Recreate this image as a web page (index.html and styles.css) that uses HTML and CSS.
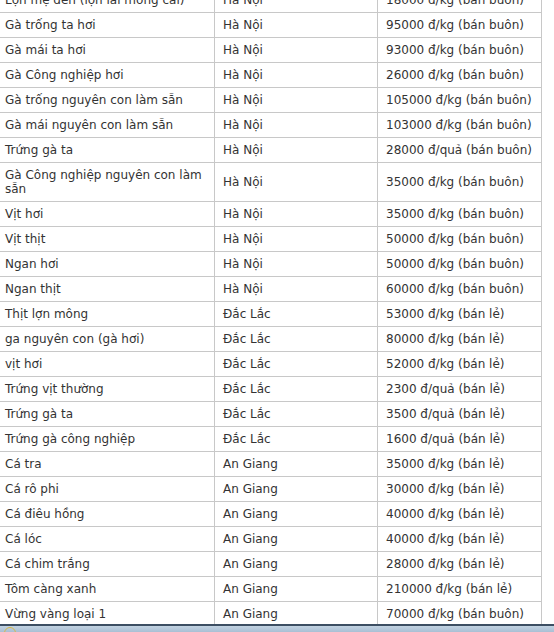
FILE: index.html
```html
<!DOCTYPE html>
<html lang="vi">
<head>
<meta charset="utf-8">
<link rel="stylesheet" href="styles.css">
</head>
<body>
<table class="prices">
<colgroup><col class="c1"><col class="c2"><col class="c3"></colgroup>
<tbody>
<tr><td>Lợn mẹ đen (lợn lai móng cái)</td><td>Hà Nội</td><td>18000 đ/kg (bán buôn)</td></tr>
<tr><td>Gà trống ta hơi</td><td>Hà Nội</td><td>95000 đ/kg (bán buôn)</td></tr>
<tr><td>Gà mái ta hơi</td><td>Hà Nội</td><td>93000 đ/kg (bán buôn)</td></tr>
<tr><td>Gà Công nghiệp hơi</td><td>Hà Nội</td><td>26000 đ/kg (bán buôn)</td></tr>
<tr><td>Gà trống nguyên con làm sẵn</td><td>Hà Nội</td><td>105000 đ/kg (bán buôn)</td></tr>
<tr><td>Gà mái nguyên con làm sẵn</td><td>Hà Nội</td><td>103000 đ/kg (bán buôn)</td></tr>
<tr><td>Trứng gà ta</td><td>Hà Nội</td><td>28000 đ/quả (bán buôn)</td></tr>
<tr><td>Gà Công nghiệp nguyên con làm sẵn</td><td>Hà Nội</td><td>35000 đ/kg (bán buôn)</td></tr>
<tr><td>Vịt hơi</td><td>Hà Nội</td><td>35000 đ/kg (bán buôn)</td></tr>
<tr><td>Vịt thịt</td><td>Hà Nội</td><td>50000 đ/kg (bán buôn)</td></tr>
<tr><td>Ngan hơi</td><td>Hà Nội</td><td>50000 đ/kg (bán buôn)</td></tr>
<tr><td>Ngan thịt</td><td>Hà Nội</td><td>60000 đ/kg (bán buôn)</td></tr>
<tr><td>Thịt lợn mông</td><td>Đắc Lắc</td><td>53000 đ/kg (bán lẻ)</td></tr>
<tr><td>ga nguyên con (gà hơi)</td><td>Đắc Lắc</td><td>80000 đ/kg (bán lẻ)</td></tr>
<tr><td>vịt hơi</td><td>Đắc Lắc</td><td>52000 đ/kg (bán lẻ)</td></tr>
<tr><td>Trứng vịt thường</td><td>Đắc Lắc</td><td>2300 đ/quả (bán lẻ)</td></tr>
<tr><td>Trứng gà ta</td><td>Đắc Lắc</td><td>3500 đ/quả (bán lẻ)</td></tr>
<tr><td>Trứng gà công nghiệp</td><td>Đắc Lắc</td><td>1600 đ/quả (bán lẻ)</td></tr>
<tr><td>Cá tra</td><td>An Giang</td><td>35000 đ/kg (bán lẻ)</td></tr>
<tr><td>Cá rô phi</td><td>An Giang</td><td>30000 đ/kg (bán lẻ)</td></tr>
<tr><td>Cá điêu hồng</td><td>An Giang</td><td>40000 đ/kg (bán lẻ)</td></tr>
<tr><td>Cá lóc</td><td>An Giang</td><td>40000 đ/kg (bán lẻ)</td></tr>
<tr><td>Cá chim trắng</td><td>An Giang</td><td>28000 đ/kg (bán lẻ)</td></tr>
<tr><td>Tôm càng xanh</td><td>An Giang</td><td>210000 đ/kg (bán lẻ)</td></tr>
<tr><td>Vừng vàng loại 1</td><td>An Giang</td><td>70000 đ/kg (bán buôn)</td></tr>
</tbody>
</table>
<div class="taskbar"><span class="orb"></span></div>
</body>
</html>
```
FILE: styles.css
```css
html, body {
  margin: 0;
  padding: 0;
  background: #fff;
  overflow: hidden;
}
body {
  font-family: "DejaVu Sans", Verdana, sans-serif;
  font-size: 12px;
  color: #333;
}
.prices {
  border-collapse: collapse;
  table-layout: fixed;
  width: 545px;
  margin: -13px 0 0 -4px;
}
.prices .c1 { width: 218px; }
.prices .c2 { width: 163px; }
.prices .c3 { width: 164px; }
.prices td {
  border: 1px solid #c8c8c8;
  padding: 5px 8px;
  line-height: 14px;
  vertical-align: middle;
  text-align: left;
}
.taskbar {
  position: fixed;
  left: 0;
  right: 0;
  bottom: 0;
  height: 6px;
  border-top: 2px solid #3d4f63;
  background: linear-gradient(#c3d3e2, #a9bfd4);
}
.orb {
  position: absolute;
  left: 4px;
  top: 1px;
  width: 12px;
  height: 12px;
  border-radius: 50%;
  border: 1px solid #d8b94a;
  box-sizing: border-box;
}
```
